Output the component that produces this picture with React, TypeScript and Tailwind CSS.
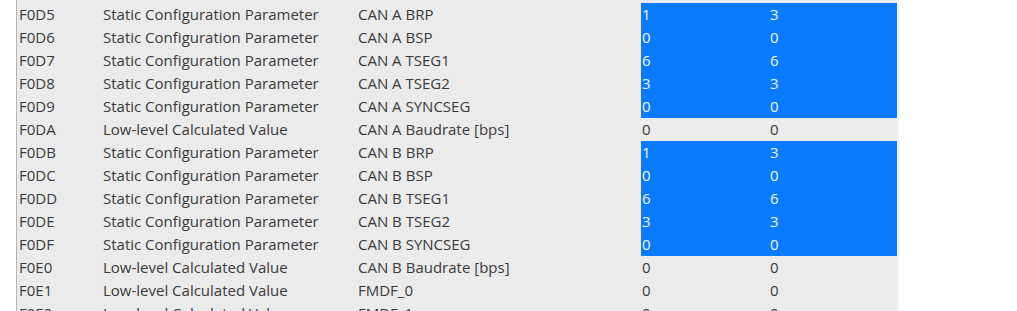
const rows: [string, string, string, string, string, boolean][] = [
  ["F0D5", "Static Configuration Parameter", "CAN A BRP", "1", "3", true],
  ["F0D6", "Static Configuration Parameter", "CAN A BSP", "0", "0", true],
  ["F0D7", "Static Configuration Parameter", "CAN A TSEG1", "6", "6", true],
  ["F0D8", "Static Configuration Parameter", "CAN A TSEG2", "3", "3", true],
  ["F0D9", "Static Configuration Parameter", "CAN A SYNCSEG", "0", "0", true],
  ["F0DA", "Low-level Calculated Value", "CAN A Baudrate [bps]", "0", "0", false],
  ["F0DB", "Static Configuration Parameter", "CAN B BRP", "1", "3", true],
  ["F0DC", "Static Configuration Parameter", "CAN B BSP", "0", "0", true],
  ["F0DD", "Static Configuration Parameter", "CAN B TSEG1", "6", "6", true],
  ["F0DE", "Static Configuration Parameter", "CAN B TSEG2", "3", "3", true],
  ["F0DF", "Static Configuration Parameter", "CAN B SYNCSEG", "0", "0", true],
  ["F0E0", "Low-level Calculated Value", "CAN B Baudrate [bps]", "0", "0", false],
  ["F0E1", "Low-level Calculated Value", "FMDF_0", "0", "0", false],
  ["F0E2", "Low-level Calculated Value", "FMDF_1", "0", "0", false],
];

export default function App() {
  return (
    <div className="flex h-[311px] w-[1017px] overflow-hidden bg-white" style={{ fontFamily: '"Open Sans", sans-serif' }}>
      <div className="w-[17px] shrink-0 border-r border-[#b4b4b4] bg-white" />
      <div className="flex w-[880px] shrink-0 flex-col bg-[#ebebeb] pt-[3px] text-[15px] text-[#3a3a3a]">
        {rows.map(([a, b, c, d, e, sel]) => (
          <div key={a} className="flex h-[23px] shrink-0 items-center leading-[23px]">
            <div className="w-[86px] shrink-0 pl-[2px]">{a}</div>
            <div className="w-[255px] shrink-0">{b}</div>
            <div className="w-[283px] shrink-0">{c}</div>
            <div className={`flex h-full flex-1 ${sel ? "bg-[#0a7bff] text-[#eef6ff]" : ""}`}>
              <div className="w-[129px] shrink-0 pl-[1px]">{d}</div>
              <div className="flex-1">{e}</div>
            </div>
          </div>
        ))}
      </div>
      <div className="w-[2px] shrink-0 bg-[#f4f4f4]" />
    </div>
  );
}
